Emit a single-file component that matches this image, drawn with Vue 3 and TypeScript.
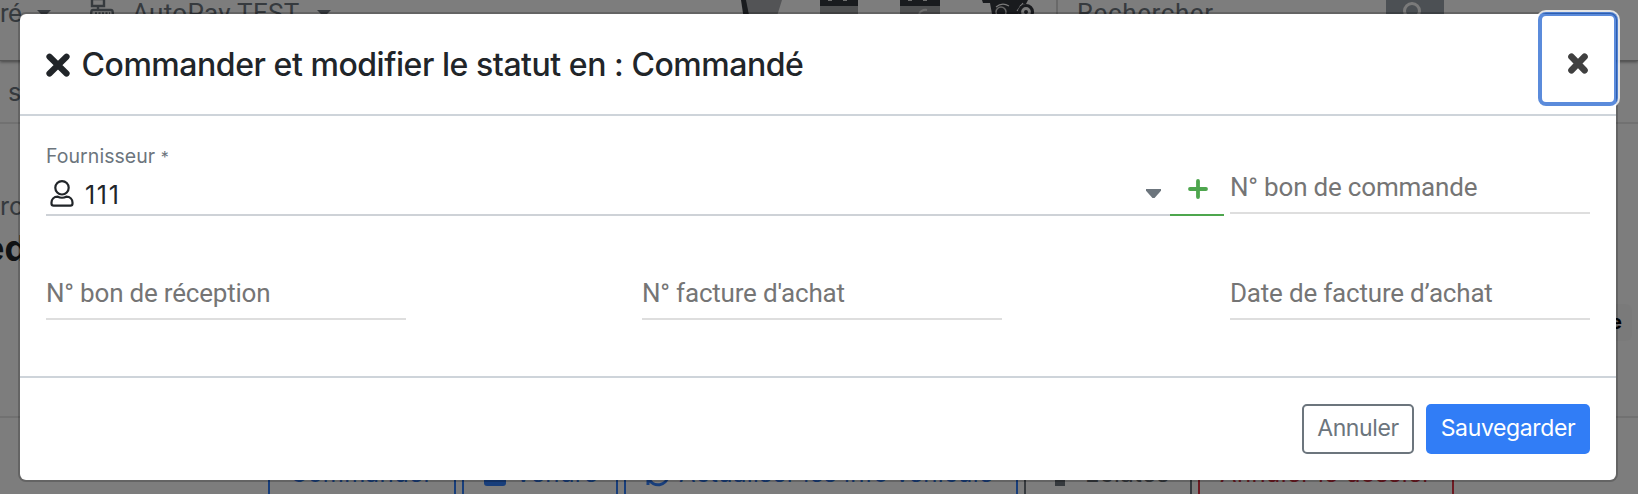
<script setup lang="ts">
import { ref } from 'vue'

interface Field {
  label: string
  value: string
}
interface Action {
  label: string
  kind: string
}

const orderNumber = ref<Field>({ label: 'N° bon de commande', value: '' })
const fields = ref<Field[]>([
  { label: 'N° bon de réception', value: '' },
  { label: "N° facture d'achat", value: '' },
  { label: 'Date de facture d’achat', value: '' },
])
const actions: Action[] = [
  { label: 'Commander', kind: 'order' },
  { label: 'Vendre', kind: 'sell' },
  { label: 'Actualiser les info véhicule', kind: 'refresh' },
  { label: 'Eclatés', kind: 'parts' },
  { label: 'Annuler le dossier', kind: 'cancel' },
]
</script>

<template>
  <div class="screen">
    <div class="page">
      <header class="topbar">
        <span class="nav-end">ré</span>
        <i class="caret first"></i>
        <svg class="register" width="24" height="30" viewBox="0 0 24 30" fill="none" stroke="#6c757d" stroke-width="2.4">
          <path d="M2 -1H14V6H2ZM8 6V10M3 10H21Q22.5 10 22.7 12L24 29H0L1.3 12Q1.5 10 3 10Z" />
          <path d="M5 13.5H20M5 18H20" stroke-dasharray="2 1.5" />
        </svg>
        <span class="brand">AutoPay TEST</span>
        <i class="caret second"></i>
        <svg class="tools" width="300" height="30" viewBox="740 0 300 30">
          <path d="M745 0H782L777 16H748Z" fill="#a7a9ad" />
          <path d="M741 0H746L750 20H744Z" fill="#33363d" />
          <g fill="#a1a2a5"><path d="M820 6H858V30H820ZM900 6H940V30H900Z" /></g>
          <path d="M820 0H858V6H820ZM900 0H940V6H900Z" fill="#33363d" />
          <path d="M828 0H832M843 0H847M908 0H912M923 0H927" stroke="#ddd" stroke-width="2" />
          <path d="M919 14Q922 9 927 10" stroke="#ddd" stroke-width="2" fill="none" />
          <path d="M982 0H1028L1026 4L1020 5L1018 14H992L990 3H983Z" fill="#33363d" />
          <path d="M996 7Q1002 2 1009 6M1017 11L1023 3" fill="none" stroke="#f4f4f4" stroke-width="1.2" />
          <circle cx="1001" cy="12" r="5" fill="#33363d" stroke="#c8c8c8" stroke-width="1.5" />
          <circle cx="1026" cy="12" r="6.5" fill="#f4f4f4" stroke="#33363d" stroke-width="3.2" />
          <circle cx="1026" cy="12" r="2" fill="#33363d" />
        </svg>
        <i class="divider"></i>
        <span class="search">Rechercher</span>
        <span class="search-button">
          <svg width="24" height="28" viewBox="0 0 24 28" fill="none" stroke="#f5f5f5" stroke-width="3">
            <circle cx="10" cy="11" r="7.5" /><path d="M15 17L22 25" />
          </svg>
        </span>
      </header>
      <div class="subbar"><span>s</span></div>
      <section class="content">
        <div class="summary"><span>ro</span><strong>ed</strong></div>
        <b class="tag">e</b>
      </section>
      <footer class="actions">
        <div v-for="action in actions" :key="action.kind" class="action" :class="action.kind">
          <i v-if="action.kind === 'sell'" class="box"></i>
          <svg v-if="action.kind === 'refresh'" class="sync" width="24" height="26" viewBox="0 0 24 26" fill="none" stroke="currentColor" stroke-width="3">
            <path d="M2 11A10 10 0 0 1 21 8M22 15A10 10 0 0 1 3 18M2 24V17H9" />
          </svg>
          <i v-if="action.kind === 'parts'" class="part"></i>
          <span>{{ action.label }}</span>
        </div>
      </footer>
    </div>

    <div class="backdrop">
      <div class="modal" role="dialog">
        <header class="modal-header">
          <svg class="title-icon" width="24" height="24" viewBox="0 0 24 24" stroke="#212529" stroke-width="6.2" stroke-linecap="round">
            <path d="M3.5 3.7L20.5 20.5M20.5 3.7L3.5 20.5" />
          </svg>
          <h1>Commander et modifier le statut en : Commandé</h1>
          <button class="close" type="button" aria-label="Fermer">
            <svg width="22" height="23" viewBox="0 0 22 23" stroke="#404040" stroke-width="6.6" stroke-linecap="round">
              <path d="M4.5 4.7L17.5 18.3M17.5 4.7L4.5 18.3" />
            </svg>
          </button>
        </header>

        <main class="modal-body">
          <div class="row first-row">
            <div class="supplier">
              <label>Fournisseur <small>*</small></label>
              <div class="select">
                <svg width="24" height="27" viewBox="0 0 24 27" fill="none" stroke="#212529" stroke-width="2.2">
                  <circle cx="12" cy="7.8" r="6.7" />
                  <path d="M7.8 16.7C10 17.9 14 17.9 16.2 16.7C20.3 16.7 22.5 19.4 22.5 22.6V23.6Q22.5 25.7 20.4 25.7H3.6Q1.5 25.7 1.5 23.6V22.6C1.5 19.4 3.7 16.7 7.8 16.7Z" />
                </svg>
                <span>111</span>
                <i class="arrow"></i>
              </div>
            </div>
            <button class="add" type="button" aria-label="Ajouter">
              <svg width="20" height="20" viewBox="0 0 20 20" stroke="#4ea64e" stroke-width="3.8" stroke-linecap="round">
                <path d="M2 10H18M10 2V18" />
              </svg>
            </button>
            <div class="field"><span>{{ orderNumber.label }}</span></div>
          </div>
          <div class="row second-row">
            <div v-for="field in fields" :key="field.label" class="field"><span>{{ field.label }}</span></div>
          </div>
        </main>

        <footer class="modal-footer">
          <button class="btn cancel-btn" type="button"><span>Annuler</span></button>
          <button class="btn save-btn" type="button"><span>Sauvegarder</span></button>
        </footer>
      </div>
    </div>
  </div>
</template>

<style>
body { margin: 0; overflow: hidden; }
</style>

<style scoped>
* { box-sizing: border-box; }
.screen { position: relative; width: 1638px; height: 494px; overflow: hidden; font-family: Inter, "Liberation Sans", sans-serif; white-space: nowrap; }
.page { height: 494px; overflow: hidden; background: #fafafa; display: flex; flex-direction: column; color: #6c757d; }
.topbar { height: 61px; flex: none; display: flex; align-items: flex-start; font: 26px/30px Roboto, sans-serif; box-shadow: 0 1px 3px #888; border-bottom: 1px solid #aaa; }
.nav-end { width: 37px; margin-top: -2px; letter-spacing: -0.5px; }
.caret { width: 14px; height: 7px; margin-top: 10px; background: #6c757d; clip-path: polygon(0 0, 100% 0, 50% 100%); }
.register { margin-left: 39px; }
.brand { width: 185px; margin: -2px 0 0 18px; letter-spacing: 0.3px; }
.second { margin-left: 0; }
.tools { margin-left: 409px; }
.divider { width: 2px; height: 44px; margin-left: 16px; background: #d2d2d2; }
.search { width: 309px; margin: -2px 0 0 19px; letter-spacing: 0.6px; }
.search-button { width: 58px; height: 40px; padding-left: 16px; background: #99a1a8; }
.subbar { height: 63px; flex: none; border-bottom: 2px solid #e2e2e2; padding: 13px 0 0 8px; font-size: 25px; line-height: 36px; }
.content { height: 294px; flex: none; border-bottom: 2px solid #e2e2e2; display: flex; justify-content: space-between; }
.summary { display: flex; flex-direction: column; padding-top: 65px; font-size: 25px; line-height: 34px; }
.summary strong { color: #212529; font-size: 36px; line-height: 46px; margin: 2px 0 0 -17px; }
.tag { width: 42px; height: 37px; margin: 180px 6px 0 0; padding-right: 10px; text-align: right; font-size: 20px; line-height: 37px; color: #000; background: #f5f5f5; border-radius: 6px; }
.actions { display: flex; gap: 6px; padding: 33px 0 0 268px; }
.action { height: 60px; flex: none; display: flex; border: 2px solid currentColor; padding: 6px 0 0 20px; font-size: 24px; line-height: 30px; letter-spacing: 0.4px; color: #317df6; }
.order { width: 188px; }
.sell { width: 156px; }
.refresh { width: 394px; }
.parts { width: 168px; padding-left: 29px; color: #6c757d; }
.cancel { width: 256px; color: #dc3545; }
.box { width: 22px; height: 22px; margin: 5px 9px 0 0; background: #317df6; border-radius: 3px; }
.sync { margin: 2px 9px 0 0; }
.part { width: 10px; height: 22px; margin: 5px 20px 0 0; background: #6c757d; }

.backdrop { position: absolute; inset: 0; padding: 12px 18px; background: rgba(0, 0, 0, 0.5); }
.modal { width: 1600px; height: 470px; border: 2px solid rgba(0, 0, 0, 0.2); border-radius: 8px; background: #fff; background-clip: padding-box; display: flex; flex-direction: column; color: #212529; }
.modal-header { height: 102px; flex: none; display: flex; align-items: flex-start; border-bottom: 2px solid #ced4da; padding-left: 26px; }
.title-icon { margin-top: 39px; }
h1 { margin: 31px 0 0 11.5px; font-size: 32px; line-height: 40px; font-weight: 500; letter-spacing: -0.45px; }
button { font-family: inherit; }
.close { width: 80px; height: 94px; margin: -2px -2px 0 auto; border: 4px solid rgba(24, 92, 204, 0.71); border-radius: 8px; background: #fff; background-clip: padding-box; box-shadow: 0 0 0 2px rgba(255, 255, 255, 0.8); display: flex; align-items: center; justify-content: center; padding: 9px 0 0; }
.modal-body { height: 260px; flex: none; padding: 0 26px; }
.row { display: flex; }
.first-row { height: 100px; align-items: flex-end; }
.supplier { width: 1124px; flex: none; height: 74px; border-bottom: 2px solid #ced2d7; }
.supplier label { display: block; padding-top: 1px; font-size: 19.5px; line-height: 26px; color: #6c757d; letter-spacing: 0.05px; }
.supplier small { font-size: 16px; }
.select { display: flex; align-items: center; height: 42px; padding: 4px 9px 0 4px; }
.select span { margin: 3px 0 0 11px; font-size: 25px; letter-spacing: 1.7px; }
.arrow { width: 15px; height: 9px; margin: 1px 0 0 auto; background: #6c757d; clip-path: polygon(0 0, 100% 0, 100% 20%, 57% 100%, 43% 100%, 0 20%); }
.add { width: 54px; flex: none; height: 52px; border: 0; border-bottom: 2px solid #4ea64e; background: none; padding: 0 0 0 2px; display: flex; align-items: center; justify-content: center; }
.field { width: 360px; flex: none; height: 52px; border-bottom: 2px solid #dedede; padding: 9px 0 0; font: 26px/32px Roboto, sans-serif; letter-spacing: -0.2px; color: #757575; }
.first-row .field { margin: 0 0 2px 6px; }
.second-row { height: 104px; align-items: flex-end; justify-content: space-between; }
.second-row .field:nth-child(2) { margin-left: 8px; }
.modal-footer { height: 104px; flex: none; border-top: 2px solid #ced4da; padding: 26px 26px 0; display: flex; justify-content: flex-end; gap: 12px; }
.btn { height: 50px; border-radius: 5px; font-size: 23px; line-height: 44px; letter-spacing: -0.37px; padding: 0 0 2px; }
.cancel-btn { width: 112px; border: 2px solid #6c757d; background: #fff; color: #6c757d; }
.save-btn { width: 164px; border: 0; background: #317df6; color: #fff; }
</style>
